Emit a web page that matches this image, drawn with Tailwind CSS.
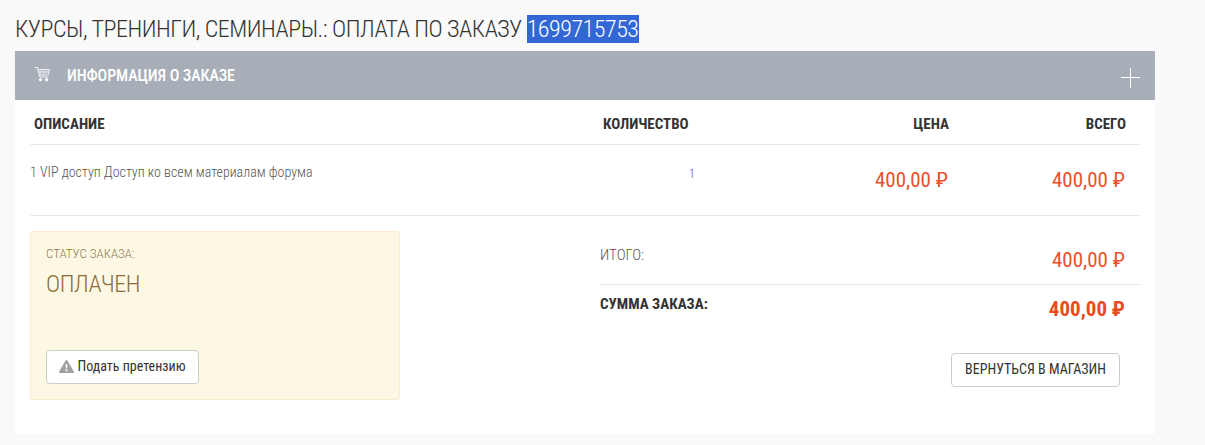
<!DOCTYPE html>
<html lang="ru">
<head>
  <meta charset="UTF-8" />
  <title>Оплата по заказу</title>
  <script src="https://cdn.jsdelivr.net/npm/@tailwindcss/browser@4"></script>
</head>
<body class="bg-[#f9f9f9] font-['Roboto',sans-serif] font-stretch-condensed text-[#333] overflow-hidden">
  <div class="w-[1205px] h-[445px] pl-[15px] pt-[15px]">
    <h1 class="h-[36px] text-[24px] leading-[28px] font-light tracking-[-0.49px] text-[#333]">КУРСЫ, ТРЕНИНГИ, СЕМИНАРЫ.: ОПЛАТА ПО ЗАКАЗУ <span class="bg-[#3367d6] text-white">1699715753</span></h1>

    <div class="w-[1140px] h-[383px] bg-white">
      <div class="h-[49px] bg-[#a7aeb7] flex items-center pl-[20px] pr-[15px] text-white">
        <svg class="w-[15px] h-[15px] mb-[2px]" viewBox="0 0 15 15" fill="none" stroke="white" stroke-width="0.9">
          <path d="M0 .5h2.500l2.300 9.500h8.200"/>
          <path d="M3 2.500h11.500l-1.200 5.500H4.200M3.500 5h10.500" stroke-opacity="0.9"/>
          <path d="M6 2.500v5.500M8.500 2.500v5.500M11 2.500v5.500" stroke-opacity="0.6"/>
          <circle cx="5.500" cy="12.800" r="1.200" fill="white"/>
          <circle cx="11.500" cy="12.800" r="1.200" fill="white"/>
        </svg>
        <span class="ml-[17px] mt-[1px] text-[16px] font-medium tracking-[-0.1px]">ИНФОРМАЦИЯ О ЗАКАЗЕ</span>
        <svg class="ml-auto mt-[5px] w-[19px] h-[20px]" viewBox="0 0 19 20" stroke="white" stroke-width="1"><path d="M0 9.500h19M9.500 0v20"/></svg>
      </div>

      <div class="mx-[15px]">
        <div class="h-[45px] pt-[5px] flex items-center border-b border-[#e9e9e9] text-[15px] font-bold text-[#333]">
          <div class="w-[573px] pl-[4px]">ОПИСАНИЕ</div>
          <div class="w-[130px]">КОЛИЧЕСТВО</div>
          <div class="w-[216px] text-right">ЦЕНА</div>
          <div class="w-[177px] text-right">ВСЕГО</div>
        </div>
        <div class="h-[71px] flex border-b border-[#e9e9e9]">
          <div class="w-[573px] pt-[19px] text-[14px] leading-[16px] font-light text-[#555]">1 VIP доступ Доступ ко всем материалам форума</div>
          <div class="w-[130px] pt-[21px] pl-[86px] text-[12px] leading-[16px] font-light text-[#555]">1</div>
          <div class="w-[215px] pt-[22px] text-right text-[21px] leading-[26px] text-[#e8512a]">400,00 ₽</div>
          <div class="w-[177px] pt-[22px] text-right text-[21px] leading-[26px] text-[#e8512a]">400,00 ₽</div>
        </div>

        <div class="flex pt-[15px]">
          <div class="w-[370px] h-[169px] bg-[#fcf8e3] border border-[#faebcc] rounded-[3px] pl-[15px] pt-[14px]">
            <div class="text-[13px] leading-[16px] font-light text-[#8a7a55]">СТАТУС ЗАКАЗА:</div>
            <div class="mt-[8px] text-[24px] leading-[28px] font-light tracking-[-0.4px] text-[#8a6d3b]">ОПЛАЧЕН</div>
            <button class="mt-[52px] w-[153px] h-[34px] pb-[2px] flex items-center justify-center gap-[3px] bg-white border border-[#ccc] rounded-[4px] text-[14px] text-[#333]">
              <svg class="w-[15px] h-[13px]" viewBox="0 0 15 13"><path fill-rule="evenodd" fill="#a0a0a0" d="M7.500 0c.4 0 .7.200.9.500l6.400 11c.4.700-.1 1.500-.9 1.500H1.100c-.8 0-1.300-.8-.9-1.500L6.600.5c.2-.3.500-.5.9-.500zM6.600 4l.2 4.500h1.400L8.400 4zM6.600 9.500v1.800h1.800V9.500z"/></svg>
              Подать претензию
            </button>
          </div>
          <div class="w-[540px] ml-[200px]">
            <div class="h-[54px] pt-[15px] flex justify-between pr-[15px] border-b border-[#e9e9e9]">
              <span class="text-[15px] leading-[18px] font-light text-[#555]">ИТОГО:</span>
              <span class="pt-[1px] text-[21px] leading-[26px] text-[#e8512a]">400,00 ₽</span>
            </div>
            <div class="flex justify-between pr-[15px] pt-[10px]">
              <span class="text-[15px] leading-[18px] font-bold text-[#333]">СУММА ЗАКАЗА:</span>
              <span class="text-[21px] leading-[28px] font-bold text-[#e84c1f]">400,00 ₽</span>
            </div>
            <div class="flex justify-end pr-[20px] mt-[30px]">
              <button class="w-[169px] h-[34px] pb-[2px] bg-white border border-[#ccc] rounded-[4px] text-[14px] font-normal text-[#333]">ВЕРНУТЬСЯ В МАГАЗИН</button>
            </div>
          </div>
        </div>
      </div>
    </div>
  </div>
</body>
</html>
